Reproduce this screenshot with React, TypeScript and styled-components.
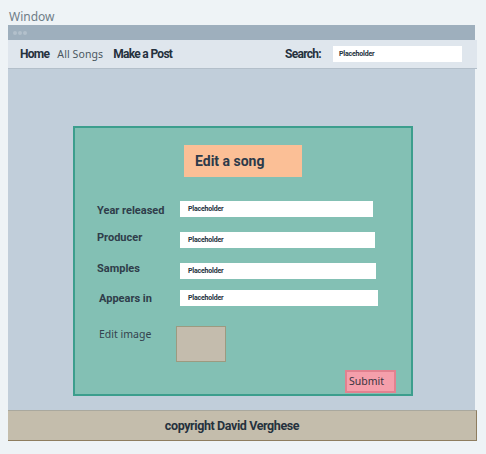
import styled, { createGlobalStyle } from 'styled-components';

const Global = createGlobalStyle`
body {
  margin: 0;
  background: #eef3f6;
  font-family: Roboto, "Liberation Sans", sans-serif;
  color: #2c3a47;
}
`

const fields = [
    { label: 'Year released', width: 193, shift: 1, indent: 0 },
    { label: 'Producer', width: 195, shift: -3, indent: 0 },
    { label: 'Samples', width: 196, shift: -3, indent: 0 },
    { label: 'Appears in', width: 198, shift: 0, indent: 2 },
];

const App = () => {
    return (
        <>
        <Global />
        <Page>
            <WindowLabel>Window</WindowLabel>
            <Frame>
                <TitleBar>
                    <Dot /><Dot /><Dot />
                </TitleBar>
                <Nav>
                    <NavLink bold>Home</NavLink>
                    <NavLink>All Songs</NavLink>
                    <NavLink bold>Make a Post</NavLink>
                    <Spacer />
                    <NavLink bold>Search:</NavLink>
                    <SearchBox>Placeholder</SearchBox>
                </Nav>
                <Content>
                    <Card>
                        <TitleBox>Edit a song</TitleBox>
                        <Fields>
                            {fields.map((f) => (
                                <Row key={f.label}>
                                    <Label shift={f.shift} indent={f.indent}>{f.label}</Label>
                                    <Input w={f.width}>Placeholder</Input>
                                </Row>
                            ))}
                        </Fields>
                        <ImageRow>
                            <ImageLabel>Edit image</ImageLabel>
                            <ImageBox />
                        </ImageRow>
                        <SubmitRow>
                            <Submit>Submit</Submit>
                        </SubmitRow>
                    </Card>
                </Content>
                <Footer>copyright David Verghese</Footer>
            </Frame>
        </Page>
        </>
    )
}

const Page = styled.div`
padding: 9px 0 0 8px;
`
const WindowLabel = styled.div`
font-family: "Noto Sans", sans-serif;
font-size: 12px;
color: #6f7d88;
line-height: 16px;
padding-left: 1px;
`
const Frame = styled.div`
width: 469px;
display: flex;
flex-direction: column;
`
const TitleBar = styled.div`
width: 467px;
height: 15px;
background: #9eafbd;
display: flex;
align-items: center;
gap: 1px;
padding-left: 5px;
box-sizing: border-box;
`
const Dot = styled.span`
width: 4px;
height: 4px;
border-radius: 50%;
background: #b3c0cb;
`
const Nav = styled.div`
width: 469px;
height: 29px;
box-sizing: border-box;
background: #dfe6ed;
border-bottom: 1px solid #b3bfca;
display: flex;
align-items: center;
padding: 0 15px 0 12px;
gap: 8px;
`
const NavLink = styled.span<{ bold?: boolean }>`
font-size: ${props => props.bold ? '12px' : '10.5px'};
font-weight: ${props => props.bold ? 700 : 400};
letter-spacing: ${props => props.bold ? '-0.7px' : '0.1px'};
color: ${props => props.bold ? '#25313d' : '#4a5660'};
font-family: ${props => props.bold ? 'Roboto, sans-serif' : '"Noto Sans", sans-serif'};
margin-right: ${props => props.bold ? 0 : 2}px;
`
const Spacer = styled.div`
flex: 1;
`
const SearchBox = styled.div`
width: 129px;
height: 16px;
background: #fff;
margin-left: 4px;
font-size: 7px;
font-weight: 700;
letter-spacing: -0.2px;
line-height: 16px;
padding-left: 6px;
box-sizing: border-box;
color: #25313d;
`
const Content = styled.div`
width: 467px;
height: 341px;
background: #c1ceda;
padding: 57px 0 0 65px;
box-sizing: border-box;
`
const Card = styled.div`
width: 340px;
height: 270px;
box-sizing: border-box;
background: #83c0b4;
border: 2px solid #3c9e8d;
display: flex;
flex-direction: column;
padding: 17px 0 0 22px;
`
const TitleBox = styled.div`
align-self: center;
margin-left: -22px;
width: 118px;
height: 32px;
box-sizing: border-box;
background: #fbbf96;
padding-left: 11px;
font-size: 14px;
font-weight: 700;
line-height: 32px;
color: #2c3a4a;
`
const Fields = styled.div`
margin-top: 24px;
display: flex;
flex-direction: column;
`
const Row = styled.div`
display: flex;
align-items: center;
height: 16px;
margin-bottom: 15px;
&:nth-child(3) { margin-bottom: 11px; }
`
const Label = styled.span<{ shift: number; indent: number }>`
width: 83px;
padding-left: ${props => props.indent}px;
box-sizing: border-box;
font-size: 11px;
font-weight: 700;
color: #2f3d4a;
transform: translateY(${props => props.shift}px);
`
const Input = styled.div<{ w: number }>`
width: ${props => props.w}px;
height: 16px;
background: #fff;
font-size: 7px;
font-weight: 700;
letter-spacing: -0.2px;
line-height: 16px;
padding-left: 8px;
box-sizing: border-box;
color: #25313d;
`
const ImageRow = styled.div`
margin-top: 5px;
display: flex;
align-items: flex-start;
`
const ImageLabel = styled.span`
width: 77px;
padding-left: 2px;
padding-top: 1px;
font-family: "Noto Sans", sans-serif;
font-size: 10.5px;
color: #34424e;
`
const ImageBox = styled.div`
width: 50px;
height: 36px;
box-sizing: border-box;
background: #c4bcad;
border: 1px solid #9c9a80;
`
const SubmitRow = styled.div`
display: flex;
justify-content: flex-end;
padding-right: 15px;
margin-top: 8px;
`
const Submit = styled.div`
width: 51px;
height: 23px;
box-sizing: border-box;
background: #f59fab;
border: 2px solid #e2818f;
font-family: "Noto Sans", sans-serif;
font-size: 10.5px;
line-height: 19px;
padding-left: 2px;
color: #3a3440;
`
const Footer = styled.div`
width: 469px;
height: 31px;
box-sizing: border-box;
background: #c4bdac;
border-top: 1px solid #a9a89e;
border-right: 1px solid #8e7d5f;
border-bottom: 1px solid #8e7d5f;
display: flex;
align-items: center;
justify-content: center;
padding-right: 20px;
font-size: 12.5px;
font-weight: 700;
letter-spacing: -0.4px;
color: #25313d;
`

export default App;
